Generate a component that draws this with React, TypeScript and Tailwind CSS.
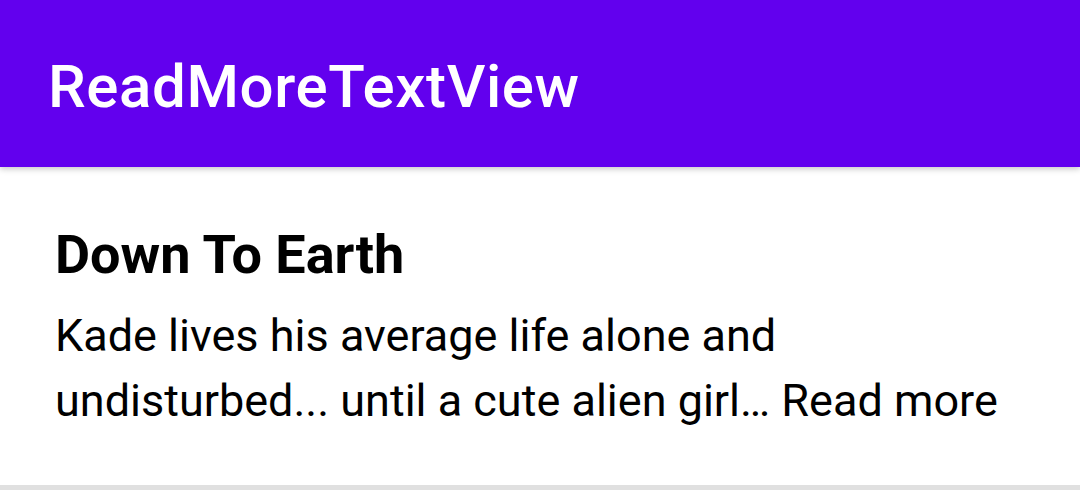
export default function App() {
  return (
    <div className="w-[1080px] h-[490px] bg-white relative overflow-hidden" style={{ fontFamily: "Roboto, 'Noto Sans', sans-serif" }}>
      <div className="h-[167px] bg-[#6200ee] pl-[48px] pt-[52px] relative z-10 shadow-[0_2px_6px_rgba(0,0,0,0.22)]">
        <h1 className="text-white text-[60px] leading-[70px] font-medium tracking-[0.6px]">ReadMoreTextView</h1>
      </div>
      <div className="pl-[55px] pt-[56px] h-[318px]">
        <h2 className="text-black text-[54px] leading-[63px] font-bold">Down To Earth</h2>
        <p className="mt-[17px] text-black text-[45px] leading-[65px]">
          Kade lives his average life alone and
          <br />
          undisturbed... until a cute alien girl… Read more
        </p>
      </div>
      <div className="h-[5px] bg-[#e0e0e0]" />
    </div>
  );
}
